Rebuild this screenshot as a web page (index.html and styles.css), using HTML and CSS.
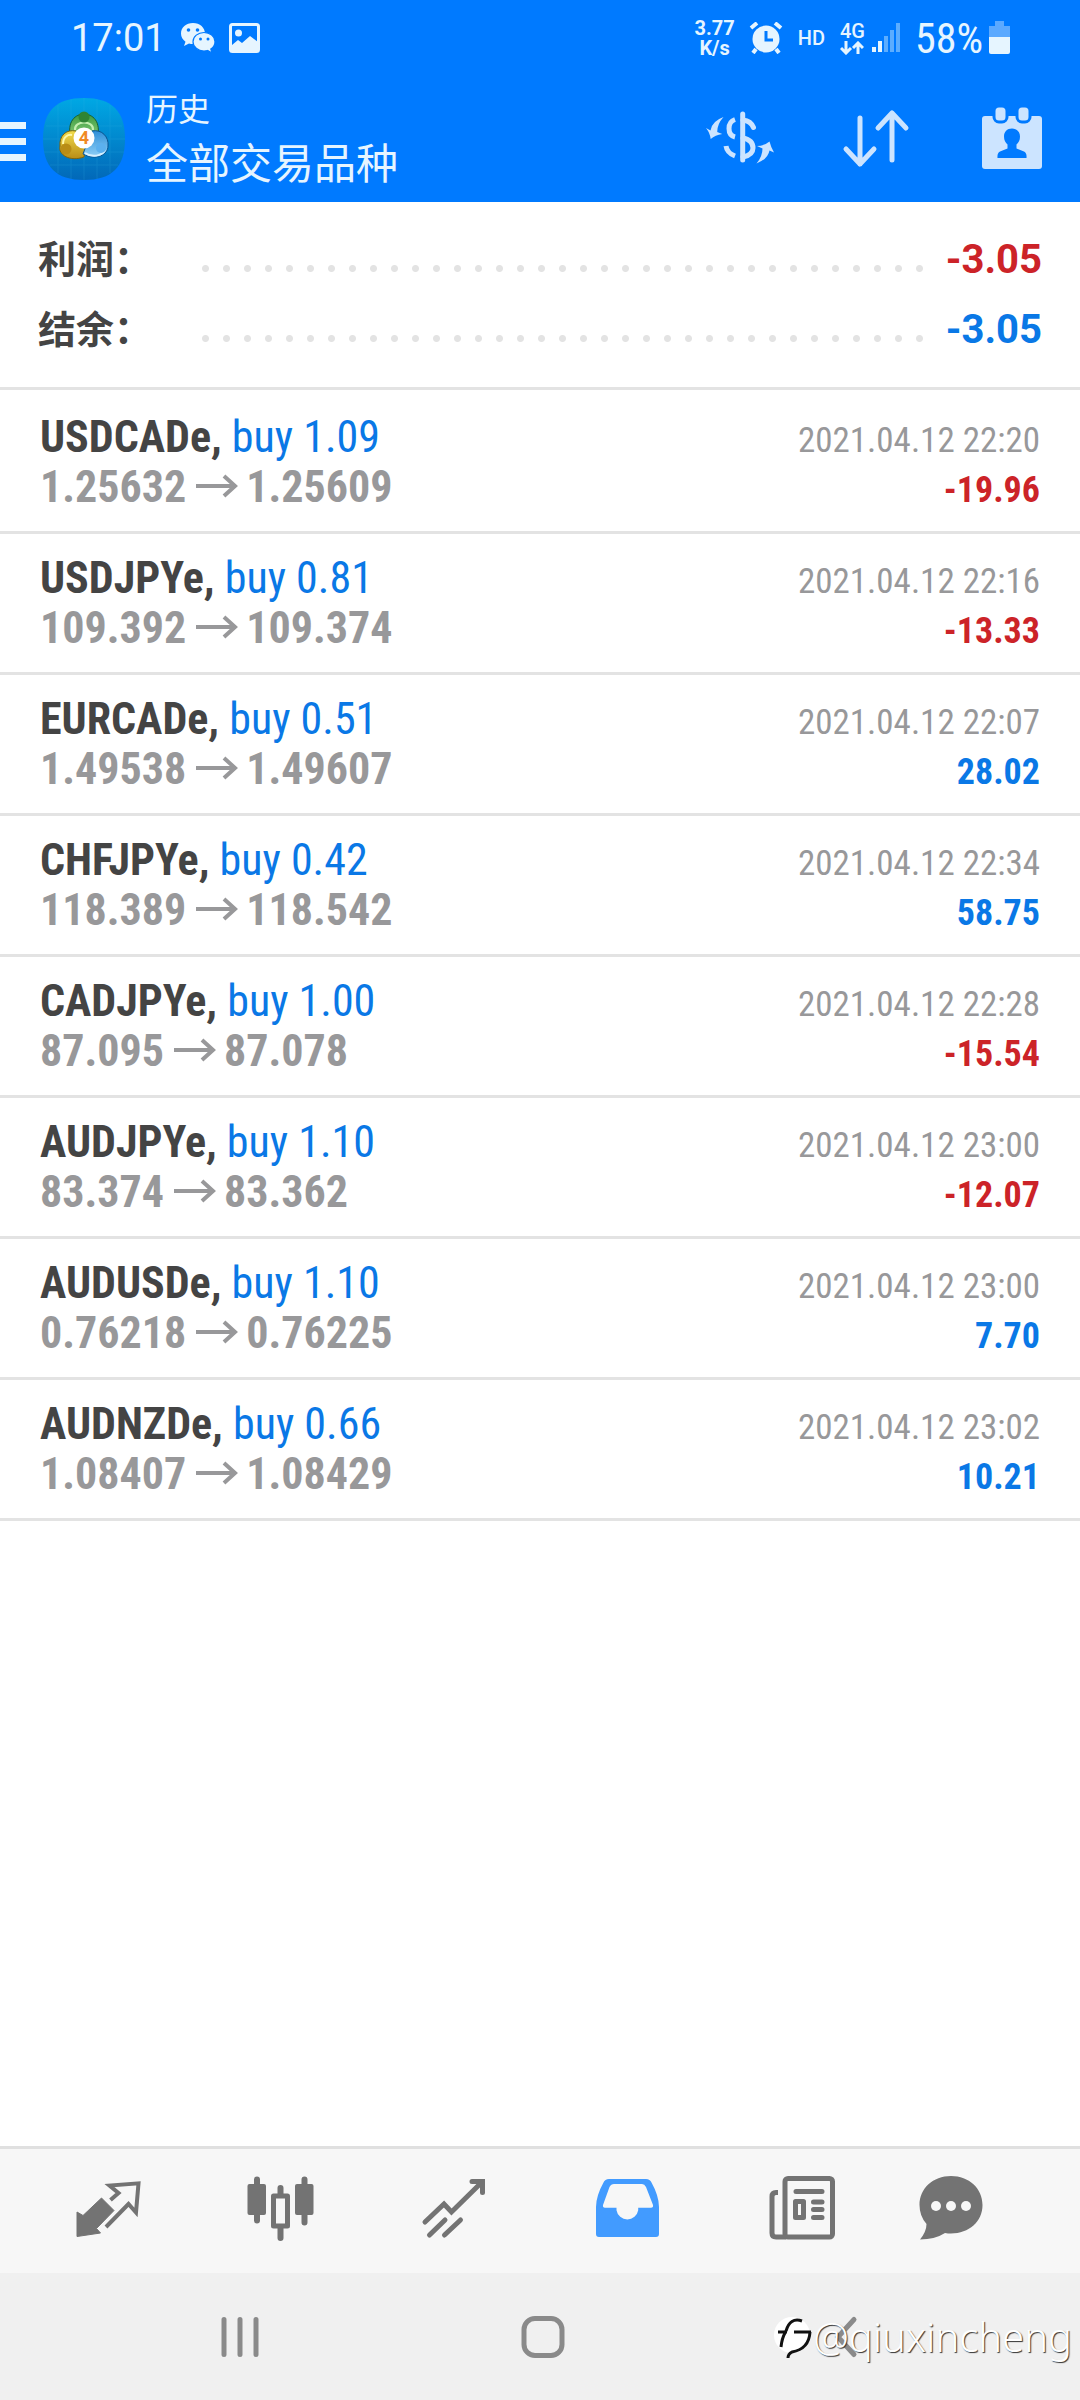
FILE: index.html
```html
<!DOCTYPE html>
<html lang="zh-CN">
<head>
    <meta charset="UTF-8">
    <meta name="viewport" content="width=device-width, initial-scale=1.0">
    <title>历史</title>
    <link rel="stylesheet" href="styles.css">
</head>
<body>
    <header class="header">
        <!-- 状态栏 -->
        <div class="status-bar">
            <span class="time">17:01</span>
            <svg class="wechat" width="36" height="32" viewBox="0 0 36 32">
                <path d="M13 1C6 1 1 5.500 1 11.500c0 3.500 1.800 6.300 4.500 8.200L4 24l5-2.500c1.300.4 2.600.5 4 .5 7 0 12-4.700 12-10.500S20 1 13 1z" fill="#e6f5ff"/>
                <path d="M24 10.500c-6 0-11 4-11 9.200s5 9.300 11 9.300c1.300 0 2.500-.2 3.600-.5L32 31l-1.200-4c2.700-1.800 4.200-4.300 4.200-7.300 0-5.200-5-9.200-11-9.200z" fill="#e6f5ff" stroke="#007aff" stroke-width="1.200"/>
                <g fill="#007aff"><circle cx="8.500" cy="8" r="1.800"/><circle cx="17.500" cy="8" r="1.800"/><circle cx="20.500" cy="17" r="1.500"/><circle cx="28" cy="17" r="1.500"/></g>
            </svg>
            <svg class="photo" width="32" height="30" viewBox="0 0 32 30">
                <rect x="1.500" y="1.500" width="28" height="27" rx="2" fill="none" stroke="#e6f5ff" stroke-width="3"/>
                <circle cx="9.500" cy="10" r="3.500" fill="#e6f5ff"/>
                <path d="M3 22l6-5 4 3 8-7 8 6v9H3z" fill="#e6f5ff"/>
            </svg>
            <div class="speed"><div>3.77</div><div>K/s</div></div>
            <svg class="alarm" width="34" height="32" viewBox="0 0 34 32">
                <circle cx="17" cy="17" r="13.500" fill="#e6f5ff"/>
                <path d="M2 6l6-5M26 1l6 5M7 27l-3 4M27 27l3 4" stroke="#e6f5ff" stroke-width="4" fill="none"/>
                <path d="M17 9v9h7" stroke="#007aff" stroke-width="3" fill="none"/>
            </svg>
            <span class="hd">HD</span>
            <span class="network">4G
                <svg width="24" height="14" viewBox="0 0 24 14">
                    <path d="M6 0v12M1 7l5 5 5-5M18 13V2M13 7l5-5 5 5" fill="none" stroke="#e6f5ff" stroke-width="3"/>
                </svg>
            </span>
            <svg class="signal" width="30" height="30" viewBox="0 0 30 30">
                <path d="M1 24h4v5H1zM7 18h4v11H7z" fill="#e6f5ff"/>
                <path d="M13 13h4v16h-4zM19 7h4v22h-4zM25 0h4v29h-4z" fill="#5cadff"/>
            </svg>
            <span class="battery-text">58%</span>
            <svg width="22" height="34" viewBox="0 0 22 34">
                <path d="M6 0h9v5h6v11H0V5h6z" fill="#5ba9ff"/>
                <path d="M0 16h21v15q0 2-2 2H2q-2 0-2-2z" fill="#e6f5ff"/>
            </svg>
        </div>
        <!-- 标题栏 -->
        <div class="title-bar">
            <button class="menu" aria-label="菜单"></button>
            <svg class="logo" width="84" height="84" viewBox="0 0 84 84">
                <defs>
                    <linearGradient id="bg" x1="0" y1="0" x2="0" y2="1"><stop offset="0" stop-color="#00a8e4"/><stop offset="1" stop-color="#0268b8"/></linearGradient>
                    <linearGradient id="green" x1="0" y1="0" x2="0" y2="1"><stop offset="0" stop-color="#3b9a3f"/><stop offset="1" stop-color="#8cd07c"/></linearGradient>
                    <linearGradient id="yellow" x1="0" y1="0" x2="0" y2="1"><stop offset="0" stop-color="#f2dc4c"/><stop offset="1" stop-color="#b98d16"/></linearGradient>
                    <linearGradient id="blue" x1="0" y1="0" x2="0" y2="1"><stop offset="0" stop-color="#2f8fd8"/><stop offset="1" stop-color="#8fd0f7"/></linearGradient>
                </defs>
                <path d="M42 1C70 1 83 14 83 42S70 83 42 83 1 70 1 42 14 1 42 1z" fill="url(#bg)"/>
                <path d="M16 8v68M29 2v80M42 1v82M55 2v80M68 8v68M4 29h76M1 42h82M2 55h80M8 68h68" stroke="#37b4e6" stroke-width="1" opacity=".2"/>
                <path d="M29 42C24 24 34 17 42 17s18 7 13 25z" fill="url(#green)" stroke="#17602f" stroke-width="1"/>
                <path d="M34 34c-10-2-17 5-16 15-2 9 10 16 24 11l2-12z" fill="url(#yellow)" stroke="#7c6410" stroke-width="1"/>
                <path d="M50 34c10-2 17 6 16 15 0 9-12 15-25 8l3-8z" fill="url(#blue)" stroke="#0c5590" stroke-width="1"/>
                <path d="M33 33c-1-10 19-10 18 0" fill="none" stroke="#c3efb0" stroke-width="2"/>
                <path d="M21 47c0-7 5-10 9-9" fill="none" stroke="#fff7a8" stroke-width="2"/>
                <path d="M43 56c7 5 17 3 20-3" fill="none" stroke="#d6f0ff" stroke-width="2"/>
                <circle cx="42" cy="20" r="5.500" fill="#2f8434"/>
                <circle cx="24" cy="52" r="5.500" fill="#b98d16"/>
                <circle cx="59" cy="51" r="5" fill="#5bb0ee"/>
                <circle cx="42" cy="41" r="10.500" fill="#fff"/>
                <text x="42" y="47" text-anchor="middle" class="logo-text">4</text>
            </svg>
            <h1 class="title"><small>历史</small>全部交易品种</h1>
            <button class="action" aria-label="交易品种">
                <svg width="72" height="72" viewBox="0 0 72 72">
                    <g fill="none" stroke="#cce4ff" stroke-width="5">
                        <path d="M38.700 9v46" stroke-linecap="round"/>
                        <path d="M39 15q8 1 10.500 7.500M39 33q10 2 10 10 0 7-10 9" stroke-linecap="round"/>
                        <path d="M31 14.500q-6 2-6 9t6 8.500M22 41q1 7 9 10"/>
                    </g>
                    <path d="M19.500 12Q8 16 6.500 25.500L2 23q4 5 4.700 11 4.500-4 11.500-5l-5-2q0-8 6.300-15zM52.500 58.500Q64 54 65.500 45.500l4.500 2q-3-5-4.500-11-4.500 4-12.500 4.500l5.500 2.500q0 8-6 15z" fill="#cce4ff"/>
                </svg>
            </button>
            <button class="action" aria-label="排序">
                <svg width="72" height="72" viewBox="0 0 72 72" fill="none" stroke="#cce4ff" stroke-width="5" stroke-linecap="round" stroke-linejoin="round">
                    <path d="M20 13v46M6 44l14 15 14-15M52 55V8M38 23L52 8l14 15"/>
                </svg>
            </button>
            <button class="action" aria-label="日期">
                <svg width="72" height="72" viewBox="0 0 72 72">
                    <rect x="6" y="11" width="60" height="53" rx="3" fill="#cce4ff"/>
                    <g fill="#cce4ff" stroke="#007aff" stroke-width="3"><rect x="18" y="1" width="13" height="16" rx="5"/><rect x="41" y="1" width="13" height="16" rx="5"/></g>
                    <path d="M36 23.500c5 0 8 3.500 8 8 0 4-1.500 6-3.500 8v4l7.500 3q3 1.500 2.500 6.500h-29q-.5-5 2.500-6.500l7.500-3v-4c-2-2-3.500-4-3.500-8 0-4.500 3-8 8-8z" fill="#007aff"/>
                </svg>
            </button>
        </div>
    </header>

    <main class="content">
        <!-- 汇总 -->
        <dl class="summary">
            <div class="summary-row"><dt>利润：</dt><dd class="loss">-3.05</dd></div>
            <div class="summary-row"><dt>结余：</dt><dd class="profit">-3.05</dd></div>
        </dl>
        <!-- 交易记录 -->
        <ul class="history">
            <li>
                <div class="symbol"><b>USDCADe,</b> buy 1.09</div>
                <time>2021.04.12 22:20</time>
                <div class="price">1.25632<svg class="arrow" viewBox="0 0 42 24"><path d="M0 12h38M28 2l11 10-11 10"/></svg>1.25609</div>
                <div class="result loss">-19.96</div>
            </li>
            <li>
                <div class="symbol"><b>USDJPYe,</b> buy 0.81</div>
                <time>2021.04.12 22:16</time>
                <div class="price">109.392<svg class="arrow" viewBox="0 0 42 24"><path d="M0 12h38M28 2l11 10-11 10"/></svg>109.374</div>
                <div class="result loss">-13.33</div>
            </li>
            <li>
                <div class="symbol"><b>EURCADe,</b> buy 0.51</div>
                <time>2021.04.12 22:07</time>
                <div class="price">1.49538<svg class="arrow" viewBox="0 0 42 24"><path d="M0 12h38M28 2l11 10-11 10"/></svg>1.49607</div>
                <div class="result profit">28.02</div>
            </li>
            <li>
                <div class="symbol"><b>CHFJPYe,</b> buy 0.42</div>
                <time>2021.04.12 22:34</time>
                <div class="price">118.389<svg class="arrow" viewBox="0 0 42 24"><path d="M0 12h38M28 2l11 10-11 10"/></svg>118.542</div>
                <div class="result profit">58.75</div>
            </li>
            <li>
                <div class="symbol"><b>CADJPYe,</b> buy 1.00</div>
                <time>2021.04.12 22:28</time>
                <div class="price">87.095<svg class="arrow" viewBox="0 0 42 24"><path d="M0 12h38M28 2l11 10-11 10"/></svg>87.078</div>
                <div class="result loss">-15.54</div>
            </li>
            <li>
                <div class="symbol"><b>AUDJPYe,</b> buy 1.10</div>
                <time>2021.04.12 23:00</time>
                <div class="price">83.374<svg class="arrow" viewBox="0 0 42 24"><path d="M0 12h38M28 2l11 10-11 10"/></svg>83.362</div>
                <div class="result loss">-12.07</div>
            </li>
            <li>
                <div class="symbol"><b>AUDUSDe,</b> buy 1.10</div>
                <time>2021.04.12 23:00</time>
                <div class="price">0.76218<svg class="arrow" viewBox="0 0 42 24"><path d="M0 12h38M28 2l11 10-11 10"/></svg>0.76225</div>
                <div class="result profit">7.70</div>
            </li>
            <li>
                <div class="symbol"><b>AUDNZDe,</b> buy 0.66</div>
                <time>2021.04.12 23:02</time>
                <div class="price">1.08407<svg class="arrow" viewBox="0 0 42 24"><path d="M0 12h38M28 2l11 10-11 10"/></svg>1.08429</div>
                <div class="result profit">10.21</div>
            </li>
        </ul>
    </main>

    <footer class="footer">
        <!-- 底部标签 -->
        <nav class="tabs">
            <a href="#quotes" aria-label="行情">
                <svg width="72" height="72" viewBox="0 0 72 72">
                    <path d="M5 40l6 3.500L29.500 26 42 38.500l-17.500 18 4 4.500L5 64.500z" fill="#737373" stroke="#737373" stroke-linejoin="round"/>
                    <path d="M38.500 28l8-7-9-7.500 29-2.200L64 40.500 56.500 32 34 55" fill="none" stroke="#737373" stroke-width="4"/>
                </svg>
            </a>
            <a href="#chart" aria-label="图表">
                <svg width="72" height="72" viewBox="0 0 72 72">
                    <path d="M12 7.500v41M35.500 16v50M59.500 7.500v43" stroke="#737373" stroke-width="6" stroke-linecap="round"/>
                    <rect x="2.500" y="12" width="18.500" height="31" rx="2" fill="#737373"/>
                    <rect x="50" y="12" width="18.500" height="31" rx="2" fill="#737373"/>
                    <rect x="28.500" y="24" width="14" height="30" fill="#f7f7f7" stroke="#737373" stroke-width="5" stroke-linejoin="round"/>
                </svg>
            </a>
            <a href="#trade" aria-label="交易">
                <svg width="72" height="72" viewBox="0 0 72 72" fill="none" stroke="#737373" stroke-width="5" stroke-linecap="round">
                    <path d="M7 50l19-18 7.500 8L64 10M54 9.500h10.500v11M11.500 63L27 48M26.500 63l16-15"/>
                </svg>
            </a>
            <a href="#history" aria-label="历史">
                <svg width="72" height="72" viewBox="0 0 72 72">
                    <path fill-rule="evenodd" d="M18 7h37q4 0 5.500 3.500Q68 24 68 35v27q0 3-3 3H8q-3 0-3-3V35q0-11 7.500-24.500Q14 7 18 7zM23 12q-3 0-4.500 3L12 33q-.5 2.700 2 2.700h11.500v2.500a11 11 0 0 0 21.700 0v-2.500H60q2.500 0 2-2.700L55 15q-1.500-3-4-3z" fill="#429bff"/>
                </svg>
            </a>
            <a href="#news" aria-label="新闻">
                <svg width="72" height="72" viewBox="0 0 72 72" fill="none" stroke="#737373" stroke-width="5">
                    <rect x="21" y="6.500" width="47.500" height="58.500" rx="3"/>
                    <path d="M14 20.500h-2q-4 0-4 4V61q0 4 4 4h10"/>
                    <path d="M32 19.500h26M49.500 30H58M49.500 37.500H58M49.500 45.500H58" stroke-linecap="round"/>
                    <rect x="31.500" y="29.500" width="8" height="16" stroke-linejoin="round"/>
                </svg>
            </a>
            <a href="#messages" aria-label="消息">
                <svg width="72" height="72" viewBox="0 0 72 72">
                    <path d="M36 4c18 0 31.500 12.500 31.500 29S54 61.500 36 61.500q-3 0-6-.5-10 6.500-25 6.500 6.500-8 6.500-15.500Q4.500 44 4.500 33C4.500 16.500 18 4 36 4z" fill="#737373"/>
                    <g fill="#f7f7f7"><circle cx="21" cy="34" r="5"/><circle cx="36" cy="34" r="5"/><circle cx="51" cy="34" r="5"/></g>
                </svg>
            </a>
        </nav>
        <!-- 系统导航栏 -->
        <div class="system-nav">
            <button aria-label="最近任务">
                <svg width="44" height="44" viewBox="0 0 44 44"><path d="M6 4.500v35M22 4.500v35M38 4.500v35"/></svg>
            </button>
            <button aria-label="主屏幕">
                <svg width="44" height="44" viewBox="0 0 44 44"><rect x="3" y="3.500" width="38" height="37" rx="11"/></svg>
            </button>
            <button aria-label="返回">
                <svg width="44" height="44" viewBox="0 0 44 44"><path d="M30 4.500L14 22l16 17.500"/></svg>
            </button>
        </div>
        <div class="watermark">
            <svg width="40" height="44" viewBox="0 0 40 44">
                <circle cx="19" cy="20" r="18" fill="#fff"/>
                <path d="M29 6Q17 2 13 16M5 17h9M12 18q-3 5-4 14M21 17h17M37 17q-1 17-18 20-4 2-4 6" fill="none" stroke="#111" stroke-width="3"/>
            </svg>
            <span>@qiuxincheng</span>
        </div>
    </footer>
</body>
</html>
```
FILE: styles.css
```css
* {
    box-sizing: border-box;
}
body {
    display: flex;
    flex-direction: column;
    min-height: 100vh;
    margin: 0;
    font-family: Roboto, "Noto Sans CJK SC", sans-serif;
    background-color: #fff;
    color: #444;
}
button {
    padding: 0;
    border: none;
    background: none;
    cursor: pointer;
}
svg {
    display: block;
    flex: none;
}
.header {
    background-color: #007aff;
    color: #e6f5ff;
}

/* 状态栏 */
.status-bar {
    display: flex;
    align-items: center;
    height: 80px;
    padding: 0 69px 4px 71px;
}
.time {
    font-size: 38px;
}
.wechat {
    margin-left: 14px;
}
.photo {
    margin-left: 13px;
}
.speed {
    margin-left: auto;
    font-size: 20px;
    font-weight: 700;
    line-height: 20px;
    text-align: center;
}
.alarm {
    margin-left: 14px;
}
.hd {
    margin-left: 15px;
    font-size: 20px;
    font-weight: 500;
}
.network {
    margin-left: 15px;
    font-size: 20px;
    font-weight: 500;
    line-height: 20px;
}
.signal {
    margin-left: 6px;
}
.battery-text {
    margin: 0 6px 0 14px;
    font-family: "Roboto Condensed", Roboto, sans-serif;
    font-size: 42px;
}

/* 标题栏 */
.title-bar {
    display: flex;
    align-items: center;
    height: 122px;
}
.menu {
    width: 26px;
    height: 39px;
    margin-right: 16px;
    border-top: 7px solid #e6f5ff;
    border-bottom: 7px solid #e6f5ff;
    background: linear-gradient(#e6f5ff, #e6f5ff) center / 100% 7px no-repeat;
}
.logo {
    margin: 0 20px 4px 0;
}
.logo-text {
    font-size: 18px;
    font-weight: 700;
    fill: #f08a24;
}
.title {
    flex: 1;
    margin: 0;
    padding-bottom: 8px;
    font-size: 42px;
    font-weight: 400;
    line-height: 54px;
}
.title small {
    display: block;
    font-size: 32px;
    line-height: 56px;
}
.action {
    display: flex;
    justify-content: center;
    width: 136px;
}

/* 汇总 */
.content {
    flex: 1;
}
.summary {
    margin: 0;
    padding: 23px 38px 22px;
    border-bottom: 3px solid #e3e3e3;
}
.summary-row {
    display: flex;
    height: 70px;
    line-height: 70px;
    font-weight: 700;
}
.summary-row dt {
    width: 157px;
    font-size: 38px;
}
.summary-row dd {
    display: flex;
    flex: 1;
    margin: 0;
    font-size: 40px;
}
.summary-row dd::before {
    content: "";
    flex: 1;
    margin-right: 14px;
    background: radial-gradient(circle, #e3e3e3 3px, transparent 4px) 0 33px / 21px 21px repeat-x;
}
.profit {
    color: #0a78e6;
}
.loss {
    color: #cc2328;
}

/* 交易记录 */
.history {
    margin: 0;
    padding: 3px 0 0;
    list-style: none;
    font-family: "Roboto Condensed", Roboto, sans-serif;
    line-height: 50px;
}
.history li {
    display: grid;
    grid-template-columns: 1fr auto;
    grid-auto-rows: 50px;
    align-items: baseline;
    padding: 19px 40px;
    border-bottom: 3px solid #e3e3e3;
}
.symbol {
    font-size: 44px;
    color: #0a78e6;
}
.symbol b {
    color: #444;
}
.price {
    font-size: 44px;
    font-weight: 700;
    color: #98989a;
}
.arrow {
    display: inline-block;
    width: 42px;
    height: 24px;
    margin: 0 8px 4px 10px;
    vertical-align: baseline;
    fill: none;
    stroke: #98989a;
    stroke-width: 4px;
}
.history time {
    font-size: 35px;
    color: #98989a;
}
.result {
    font-size: 36px;
    font-weight: 700;
    text-align: right;
}

/* 底部 */
.footer {
    position: relative;
}
.tabs {
    display: grid;
    grid-template-columns: repeat(5, 4fr) 3fr;
    height: 127px;
    padding: 23px 64px 0 21px;
    border-top: 3px solid #e0e0e0;
    background-color: #f7f7f7;
}
.tabs a {
    display: flex;
    justify-content: center;
}
.system-nav {
    display: grid;
    grid-template-columns: repeat(3, 1fr);
    height: 127px;
    padding: 0 83px 0 88px;
    background-color: #f0f0f0;
}
.system-nav button {
    display: flex;
    align-items: center;
    justify-content: center;
}
.system-nav svg {
    fill: none;
    stroke: #8a8a8a;
    stroke-width: 5px;
    stroke-linecap: round;
}

/* 水印 */
.watermark {
    position: absolute;
    right: 8px;
    bottom: 36px;
    display: flex;
    align-items: center;
    font-family: "Noto Sans", "Open Sans", sans-serif;
    font-size: 40px;
    font-weight: 300;
    line-height: 54px;
    color: #fff;
    text-shadow: 1px 1px 1px #333;
}
```
